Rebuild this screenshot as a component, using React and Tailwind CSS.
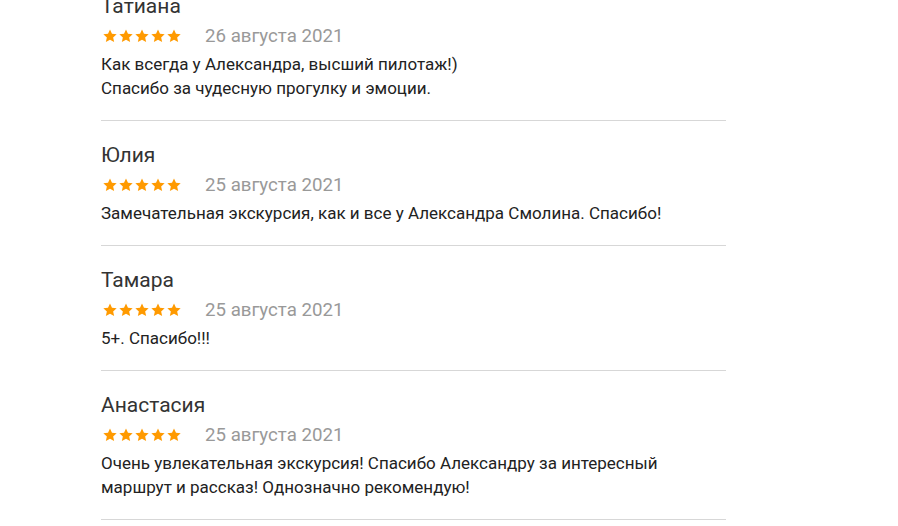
import React from 'react';

const reviews = [
  {
    name: 'Татиана',
    date: '26 августа 2021',
    text: ['Как всегда у Александра, высший пилотаж!)', 'Спасибо за чудесную прогулку и эмоции.'],
  },
  {
    name: 'Юлия',
    date: '25 августа 2021',
    text: ['Замечательная экскурсия, как и все у Александра Смолина. Спасибо!'],
  },
  {
    name: 'Тамара',
    date: '25 августа 2021',
    text: ['5+. Спасибо!!!'],
  },
  {
    name: 'Анастасия',
    date: '25 августа 2021',
    text: ['Очень увлекательная экскурсия! Спасибо Александру за интересный', 'маршрут и рассказ! Однозначно рекомендую!'],
  },
];

const Star = () => (
  <svg width="14" height="14" viewBox="0 0 24 24" className="shrink-0">
    <path
      d="M12 0.8l3.4 7.3 8 .9-6 5.4 1.7 8L12 18.4l-7.1 4 1.7-8-6-5.4 8-.9z"
      fill="#ff9a00"
    />
  </svg>
);

const Review = ({ review }) => (
  <div className="py-5 border-b border-[#d7d7d7]">
    <div className="text-[21px] leading-7 text-[#333]">{review.name}</div>
    <div className="flex h-8 items-center">
      <div className="flex gap-[2px] pl-[2px]">
        {[0, 1, 2, 3, 4].map((i) => (
          <Star key={i} />
        ))}
      </div>
      <span className="ml-[24px] text-[18.7px] leading-8 text-[#999]">{review.date}</span>
    </div>
    <div className="text-[17px] leading-6 text-[#222]">
      {review.text.map((line, i) => (
        <div key={i}>{line}</div>
      ))}
    </div>
  </div>
);

export default function App() {
  return (
    <div className="w-[898px] h-[526px] overflow-hidden bg-white" style={{ fontFamily: 'Roboto, sans-serif' }}>
      <div className="ml-[101px] w-[625px] -mt-[28px]">
        {reviews.map((r, i) => (
          <Review key={i} review={r} />
        ))}
      </div>
    </div>
  );
}
